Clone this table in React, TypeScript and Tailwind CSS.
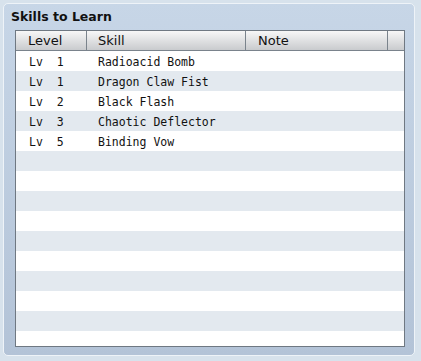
import React from 'react';

type Skill = { level: number; name: string; note?: string };

const skills: Skill[] = [
  { level: 1, name: 'Radioacid Bomb' },
  { level: 1, name: 'Dragon Claw Fist' },
  { level: 2, name: 'Black Flash' },
  { level: 3, name: 'Chaotic Deflector' },
  { level: 5, name: 'Binding Vow' },
];

const ROW_COUNT = 15;

const App: React.FC = () => {
  const rows = Array.from({ length: ROW_COUNT }, (_, i) => skills[i]);

  return (
    <div className="w-[421px] h-[361px] bg-[#d7e2ec] pt-[3px] pl-[3px] overflow-hidden">
      <div className="w-[412px] h-[353px] rounded-[5px] border border-[#eef3f8] bg-gradient-to-b from-[#c7d6e7] to-[#b3c3d7] flex flex-col">
        <div className="h-[26px] pt-[1px] flex items-center pl-[7px] text-[12.5px] font-bold text-[#111] font-['DejaVu_Sans',sans-serif]">
          Skills to Learn
        </div>
        <div className="ml-[11px] w-[390px] h-[317px] border border-[#6f7882] bg-white overflow-hidden flex flex-col">
          {/* column header */}
          <div className="h-[20px] shrink-0 flex border-b border-[#7a838c] bg-gradient-to-b from-[#f7f7f7] to-[#c9cbce] text-[13px] text-[#111] font-['DejaVu_Sans',sans-serif]">
            <div className="w-[71px] border-r border-[#7a838c] pl-[12px] flex items-center">Level</div>
            <div className="w-[159px] border-r border-[#7a838c] pl-[11px] flex items-center">Skill</div>
            <div className="w-[142px] border-r border-[#7a838c] pl-[12px] flex items-center">Note</div>
            <div className="flex-1" />
          </div>
          {rows.map((s, i) => (
            <div
              key={i}
              className={`h-[20px] shrink-0 pt-[3px] flex items-center text-[11.5px] text-[#111] font-['DejaVu_Sans_Mono',monospace] whitespace-pre ${
                i % 2 === 0 ? 'bg-white' : 'bg-[#e3e9ef]'
              }`}
            >
              <div className="w-[71px] pl-[13px]">{s ? `Lv  ${s.level}` : ''}</div>
              <div className="w-[159px] pl-[11px]">{s ? s.name : ''}</div>
              <div className="flex-1 pl-[12px]">{s?.note ?? ''}</div>
            </div>
          ))}
        </div>
      </div>
    </div>
  );
};

export default App;
